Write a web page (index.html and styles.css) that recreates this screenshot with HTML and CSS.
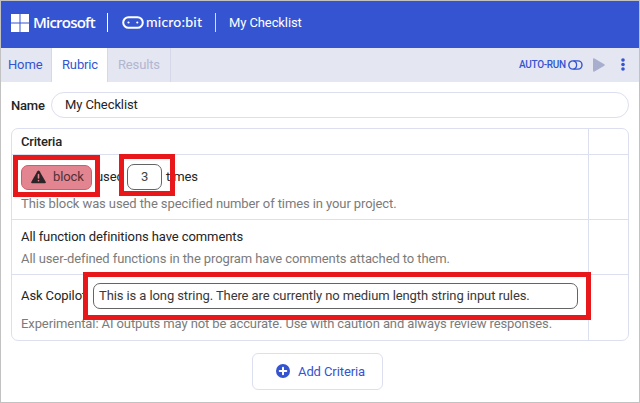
FILE: index.html
```
<!DOCTYPE html>
<html lang="en">
<head>
<meta charset="utf-8">
<title>My Checklist</title>
<link rel="stylesheet" href="styles.css">
</head>
<body>
<div class="app">
  <header class="header">
    <svg class="ms-logo" viewBox="0 0 18 18"><path fill="#fff" d="M0 0h8.5v8.5H0zM9.5 0H18v8.5H9.5zM0 9.5h8.5V18H0zM9.5 9.5H18V18H9.5z"/></svg>
    <span class="microsoft">Microsoft</span>
    <span class="divider"></span>
    <svg class="mb-logo" viewBox="0 0 22 13"><rect x="1.2" y="1.2" width="19.6" height="10.6" rx="5.3" fill="none" stroke="#fff" stroke-width="2"/><circle cx="6.5" cy="6.5" r="1.1" fill="#fff"/><circle cx="15.3" cy="6.5" r="1.1" fill="#fff"/></svg>
    <span class="microbit">micro:bit</span>
    <span class="divider second"></span>
    <span class="project">My Checklist</span>
  </header>
  <nav class="tabs">
    <span class="tab home"><span>Home</span></span>
    <span class="tab active"><span>Rubric</span></span>
    <span class="tab disabled"><span>Results</span></span>
    <div class="tools">
      <span class="auto">AUTO-RUN</span>
      <svg class="toggle" viewBox="0 0 15 10"><rect x=".8" y=".9" width="13.2" height="8.2" rx="4.1" fill="none" stroke="#3454d1" stroke-width="1.4"/><path d="M5.500 1Q8.600 1.500 8.600 5T5.500 9" fill="none" stroke="#3454d1" stroke-width="1.300"/></svg>
      <svg class="play" viewBox="0 0 12 14"><path fill="#a8afce" d="M0 1.400Q0-.3 1.500.5L11.300 6.200Q12.300 7 11.300 7.700L1.500 13.400Q0 14.200 0 12.600z"/></svg>
      <svg class="more" viewBox="0 0 4 13"><g fill="#3454d1"><circle cx="2" cy="2" r="1.8"/><circle cx="2" cy="6.500" r="1.8"/><circle cx="2" cy="11" r="1.8"/></g></svg>
    </div>
  </nav>
  <main class="content">
    <div class="name-row"><label class="name"><span>Name</span></label><div class="name-input"><span>My Checklist</span></div></div>
    <section class="table">
      <div class="row head"><div class="cell"><span>Criteria</span></div><div class="side"></div></div>
      <div class="row first">
        <div class="cell">
          <div class="rule">
            <span class="block mark"><svg class="warn" viewBox="0 0 16 14"><path fill="#2b2528" d="M8 0Q8.700 0 9.200.8L15.600 12Q16.400 13.500 14.800 13.700H1.200Q-.4 13.500.4 12L6.800.8Q7.300 0 8 0z"/><path stroke="#e18590" stroke-width="1.700" stroke-linecap="round" d="M8 4.500v3.600M8 10.800v.2"/></svg><span>block</span></span>
            <span class="used">used</span>
            <span class="number mark">3</span>
            <span class="times">times</span>
          </div>
          <p class="desc d1">This block was used the specified number of times in your project.</p>
        </div><div class="side"></div>
      </div>
      <div class="row second-row">
        <div class="cell"><p class="title">All function definitions have comments</p><p class="desc d2">All user-defined functions in the program have comments attached to them.</p></div><div class="side"></div>
      </div>
      <div class="row third">
        <div class="cell">
          <div class="rule"><span class="ask">Ask Copilot</span><span class="long mark"><span>This is a long string. There are currently no medium length string input rules.</span></span></div>
          <p class="desc d3">Experimental: AI outputs may not be accurate. Use with caution and always review responses.</p>
        </div><div class="side"></div>
      </div>
    </section>
    <div class="add"><svg viewBox="0 0 14 14"><circle cx="7" cy="7" r="7" fill="#3454d1"/><path stroke="#fff" stroke-width="2" stroke-linecap="round" d="M7 3.700v6.600M3.700 7h6.600"/></svg><span>Add Criteria</span></div>
  </main>
</div>
</body>
</html>
```
FILE: styles.css
```
* { box-sizing: border-box; }
body { margin: 0; font: 13px/16px Roboto, sans-serif; letter-spacing: -.095px; color: #242424; }
p { margin: 0; }
svg { display: block; flex: none; }
span { white-space: nowrap; }
.app { width: 640px; height: 403px; border: 1px solid #c2c2c2; background: #fff; overflow: hidden; }
.header { height: 47px; background: #3454d1; color: #fff; display: flex; align-items: center; padding: 0 0 4px 10px; }
.ms-logo { width: 18px; height: 18px; }
.microsoft { font: 600 15px/20px "Open Sans", sans-serif; letter-spacing: -.79px; margin-left: 4px; width: 62px; padding-bottom: 2px; }
.divider { flex: none; width: 1px; height: 19px; background: #fff; margin-left: 12px; }
.mb-logo { width: 22px; height: 13px; margin-left: 14px; }
.microbit { font: 500 14px/18px Lato, sans-serif; letter-spacing: .2px; margin-left: 2px; width: 57px; padding-bottom: 2px; }
.divider.second { margin-left: 12px; opacity: .8; }
.project { margin-left: 13px; letter-spacing: -.1px; }
.tabs { height: 34px; background: #e4e6f1; display: flex; align-items: center; color: #3454d1; }
.tab { height: 34px; line-height: 33px; border-right: 1px solid #d5d8e9; font-size: 13px; letter-spacing: -.15px; }
.home { width: 51px; padding-left: 7px; }
.active { width: 56px; padding-left: 10px; background: #fff; }
.disabled { width: 63px; padding-left: 10px; color: #b1b6d1; }
.tools { margin-left: auto; display: flex; align-items: center; padding: 0 14px 1px 0; }
.auto { font-size: 10px; font-weight: 500; width: 48px; letter-spacing: -.3px; }
.toggle { width: 15px; height: 10px; margin-left: 1px; }
.play { width: 12px; height: 14px; margin-left: 10px; }
.more { width: 4px; height: 13px; margin-left: 16px; }
.content { padding: 10px 10px 0; }
.name-row { display: flex; align-items: center; height: 26px; }
.name { width: 40px; font-weight: 500; padding-top: 1px; letter-spacing: -.2px; }
.name-input { flex: 1; height: 26px; border: 1px solid #dcdfef; border-radius: 13px; padding: 4px 13px; }
.table { margin-top: 10px; border: 1px solid #dcdfef; border-radius: 7px; height: 213px; }
.row { display: flex; border-bottom: 1px solid #dcdfef; }
.row:last-child { border: 0; }
.cell { flex: 1; padding-left: 9px; }
.side { width: 40px; border-left: 1px solid #dcdfef; }
.head { height: 26px; line-height: 26px; font-weight: 500; letter-spacing: -.2px; }
.first { height: 65px; }
.first .cell { padding-top: 9px; }
.rule { display: flex; align-items: center; height: 26px; }
.mark { position: relative; }
.mark::after { content: ""; position: absolute; border: 5px solid #e81719; }
.block { width: 71px; height: 25px; background: #e38590; border: 1px solid #d05b6c; border-radius: 7px; display: flex; align-items: center; padding-left: 9px; color: #513036; }
.block .warn { width: 15px; height: 14px; margin-right: 7px; }
.block::after { inset: -11px -9px -8px -9px; }
.used { margin-left: 4px; width: 28px; }
.number { width: 35px; height: 26px; border: 1px solid #656565; border-radius: 7px; text-align: center; line-height: 24px; margin-left: 3px; color: #444; }
.number::after { inset: -11px -14px -7px -9px; }
.times { margin-left: 4px; }
.desc { color: #7b7b7b; }
.d1 { margin-top: 6px; }
.second-row { height: 55px; }
.second-row .cell { padding-top: 9px; }
.d2 { margin-top: 6px; }
.third .cell { padding-top: 8px; height: 65px; }
.ask { width: 72px; }
.long { width: 485px; height: 26px; border: 1px solid #656565; border-radius: 7px; line-height: 24px; padding-left: 5px; color: #393939; }
.long::after { inset: -12px -14px -12px -11px; }
.d3 { margin-top: 7px; }
.add { margin: 12px 0 0 241px; width: 131px; height: 37px; border: 1px solid #dcdfef; border-radius: 6px; display: flex; align-items: center; color: #3454d1; padding-left: 23px; }
.add svg { width: 14px; height: 14px; margin-right: 8px; position: relative; top: -1px; }
```
